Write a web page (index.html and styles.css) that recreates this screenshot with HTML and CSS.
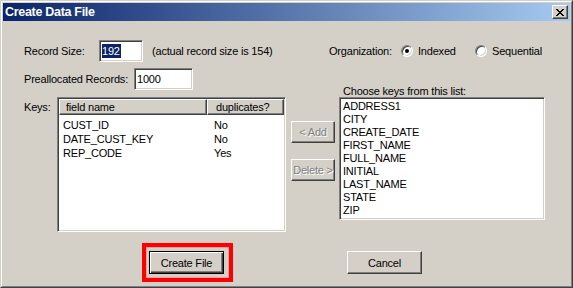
FILE: index.html
```html
<!doctype html>
<html>
<head>
<title>Create Data File</title>
<link rel="stylesheet" href="styles.css">
</head>
<body>
<div class="window">
  <div class="frame">
    <div class="titlebar">
      <span class="title">Create Data File</span>
      <span class="close">
        <svg width="8" height="7" viewBox="0 0 8 7" shape-rendering="crispEdges">
          <path d="M0 0h2v1h-2zM6 0h2v1h-2zM1 1h2v1h-2zM5 1h2v1h-2zM2 2h4v1h-4zM3 3h2v1h-2zM2 4h4v1h-4zM1 5h2v1h-2zM5 5h2v1h-2zM0 6h2v1h-2zM6 6h2v1h-2z" fill="#000"/>
        </svg>
      </span>
    </div>

    <div class="content">
      <div class="row row-size">
        <span class="lbl lbl-size">Record Size:</span>
        <div class="field field-size"><span class="sel">192</span></div>
        <span class="note">(actual record size is 154)</span>
        <div class="org">
          <span class="org-lbl">Organization:</span>
          <span class="radio checked"></span><span class="opt opt-idx">Indexed</span>
          <span class="radio"></span><span class="opt">Sequential</span>
        </div>
      </div>

      <div class="middle">
        <div class="left">
          <div class="row row-alloc">
            <span class="lbl lbl-alloc">Preallocated Records:</span>
            <div class="field field-alloc">1000</div>
          </div>

          <div class="keys">
            <span class="lbl lbl-keys">Keys:</span>
            <div class="listview">
              <div class="lv-head">
                <span class="hd hd-name">field name</span>
                <span class="hd hd-dup">duplicates?</span>
              </div>
              <div class="lv-body">
                <div class="lv-row"><span class="c-name">CUST_ID</span><span class="c-dup">No</span></div>
                <div class="lv-row"><span class="c-name">DATE_CUST_KEY</span><span class="c-dup">No</span></div>
                <div class="lv-row"><span class="c-name">REP_CODE</span><span class="c-dup">Yes</span></div>
              </div>
            </div>
            <div class="movers">
              <button class="btn btn-move btn-add" disabled>&lt; Add</button>
              <button class="btn btn-move btn-del" disabled>Delete &gt;</button>
            </div>
          </div>
        </div>

        <div class="right">
          <div class="list-lbl">Choose keys from this list:</div>
          <div class="listbox">
            <div class="item">ADDRESS1</div>
            <div class="item">CITY</div>
            <div class="item">CREATE_DATE</div>
            <div class="item">FIRST_NAME</div>
            <div class="item">FULL_NAME</div>
            <div class="item">INITIAL</div>
            <div class="item">LAST_NAME</div>
            <div class="item">STATE</div>
            <div class="item">ZIP</div>
          </div>
        </div>
      </div>

      <div class="actions">
        <span class="mark"><button class="btn btn-default">Create File</button></span>
        <button class="btn btn-cancel">Cancel</button>
      </div>
    </div>
  </div>
</div>
</body>
</html>
```

FILE: styles.css
```css
*{
    margin : 0;
    padding : 0;
    box-sizing : border-box;
}
body{
    background : #d4d0c8;
    font-family : "Liberation Sans", Arial, sans-serif;
    font-size : 11px;
    letter-spacing : -0.2px;
    color : #000;
}

.window{
    width : 573px;
    height : 288px;
    background : #d4d0c8;
    border : 1px solid;
    border-color : #d4d0c8 #404040 #404040 #d4d0c8;
}
.frame{
    height : 100%;
    border : 1px solid;
    border-color : #fff #808080 #808080 #fff;
    padding : 1px;
}

/* caption */
.titlebar{
    height : 18px;
    display : flex;
    align-items : flex-start;
    background : linear-gradient(to right, #0a246a, #a6caf0);
    padding-left : 2px;
}
.title{
    color : #fff;
    font-weight : bold;
    font-size : 12.5px;
    letter-spacing : -0.3px;
    line-height : 18px;
    flex : 1;
}
.close{
    width : 16px;
    height : 14px;
    margin : 2px 2px 0 0;
    display : flex;
    align-items : center;
    justify-content : center;
    background : #d4d0c8;
    border : 1px solid;
    border-color : #fff #404040 #404040 #fff;
    box-shadow : inset -1px -1px #808080;
}

.content{
    padding : 0 25px 0 21px;
}

.row{
    display : flex;
    align-items : center;
    height : 22px;
    line-height : 13px;
}
.row-size{
    margin-top : 19px;
}
.lbl-size{
    width : 75px;
}
.lbl-alloc{
    width : 110px;
}

.field{
    height : 22px;
    background : #fff;
    border : 1px solid;
    border-color : #808080 #fff #fff #808080;
    box-shadow : inset 1px 1px #404040, inset -1px -1px #d4d0c8;
    padding : 1px 2px;
    line-height : 18px;
}
.field-size{
    width : 44px;
}
.field-alloc{
    width : 59px;
}
.sel{
    background : #0a246a;
    color : #fff;
    display : inline-block;
    line-height : 14px;
    padding-right : 1px;
}
.note{
    margin-left : 9px;
}

.org{
    margin-left : auto;
    padding-right : 3px;
    display : flex;
    align-items : center;
}
.org-lbl{
    width : 66px;
}
.radio{
    width : 12px;
    height : 12px;
    margin-left : 6px;
    border-radius : 50%;
    background : #fff;
    border : 1px solid;
    border-color : #808080 #fff #fff #808080;
    box-shadow : inset 1px 1px #404040, inset -1px -1px #d4d0c8;
    display : flex;
    align-items : center;
    justify-content : center;
}
.radio.checked::after{
    content : "";
    width : 4px;
    height : 4px;
    border-radius : 50%;
    background : #000;
}
.opt{
    margin-left : 5px;
}
.opt-idx{
    width : 51px;
}

/* keys area */
.middle{
    display : flex;
    align-items : flex-start;
}
.left{
    width : 311px;
}
.row-alloc{
    margin-top : 6px;
}
.keys{
    display : flex;
    align-items : flex-start;
    margin-top : 7px;
}
.lbl-keys{
    width : 33px;
    padding-top : 4px;
    line-height : 13px;
}

.listview{
    width : 229px;
    height : 135px;
    background : #fff;
    border : 1px solid;
    border-color : #808080 #fff #fff #808080;
    box-shadow : inset 1px 1px #404040, inset -1px -1px #d4d0c8;
    padding : 1px;
}
.lv-head{
    display : flex;
    height : 16px;
}
.hd{
    background : #d4d0c8;
    border : 1px solid;
    border-color : #fff #404040 #404040 #fff;
    box-shadow : inset -1px -1px #808080;
    line-height : 13px;
    padding-top : 1px;
}
.hd-name{
    width : 148px;
    padding-left : 6px;
}
.hd-dup{
    width : 77px;
    padding-left : 8px;
}
.lv-body{
    padding-top : 3px;
}
.lv-row{
    display : flex;
    line-height : 14px;
}
.c-name{
    width : 148px;
    padding-left : 4px;
}
.c-dup{
    padding-left : 7px;
}

.movers{
    display : flex;
    flex-direction : column;
    margin-left : 5px;
}

.btn{
    font-family : "Liberation Sans", Arial, sans-serif;
    font-size : 11px;
    letter-spacing : -0.2px;
    color : #000;
    background : #d4d0c8;
    border : 1px solid;
    border-color : #fff #404040 #404040 #fff;
    box-shadow : inset -1px -1px #808080;
    height : 23px;
    width : 75px;
}
.btn:disabled{
    color : #808080;
    text-shadow : 1px 1px #fff;
}
.btn-move{
    width : 44px;
    height : 22px;
}
.btn-add{
    margin-top : 24px;
}
.btn-del{
    margin-top : 16px;
}

.right{
    width : 206px;
    margin-left : 4px;
    padding-top : 23px;
}
.list-lbl{
    line-height : 12px;
    padding-left : 4px;
}
.listbox{
    height : 123px;
    background : #fff;
    border : 1px solid;
    border-color : #808080 #fff #fff #808080;
    box-shadow : inset 1px 1px #404040, inset -1px -1px #d4d0c8;
    padding : 2px 3px;
}
.item{
    line-height : 13px;
}

/* bottom buttons */
.actions{
    display : flex;
    align-items : center;
    margin-top : 11px;
    padding-left : 118px;
}
.mark{
    display : inline-flex;
    border : 4px solid #f00;
    box-shadow : inset 0 0 0 1px #f4a0a0;
    padding : 4px 5px 4px 3px;
}
.btn-default{
    border : 1px solid #000;
    box-shadow : inset 1px 1px #fff, inset -1px -1px #404040, inset -2px -2px #808080;
}
.btn-cancel{
    margin-left : 114px;
}
```
